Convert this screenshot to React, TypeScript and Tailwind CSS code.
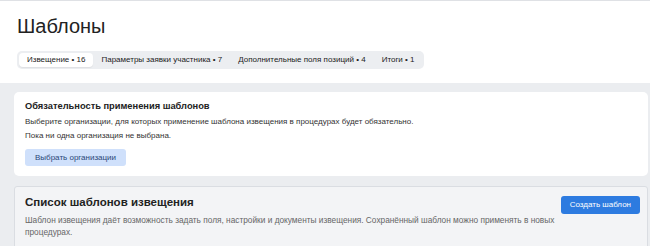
const tabs = [
  { label: "Извещение • 16", active: true },
  { label: "Параметры заявки участника • 7", active: false },
  { label: "Дополнительные поля позиций • 4", active: false },
  { label: "Итоги • 1", active: false },
];

export default function App() {
  return (
    <div className="h-[246px] w-[650px] overflow-hidden bg-[#ebedf0] font-['Liberation_Sans',Arial,sans-serif] text-[#222]">
      {/* header */}
      <div className="border-t border-[#dfe1e5] bg-white px-[17px] pb-[14px] pt-[13px]">
        <h1 className="text-[20px] leading-[24px] font-normal">Шаблоны</h1>
        <div className="mt-[13px] inline-flex items-center rounded-[5px] bg-[#eceef1] p-[2px]">
          {tabs.map((t) => (
            <div
              key={t.label}
              className={
                t.active
                  ? "rounded-[4px] bg-white px-[8px] py-[2px] text-[8px] leading-[10px] shadow-[0_1px_1px_rgba(0,0,0,0.06)]"
                  : "px-[8px] py-[2px] text-[8px] leading-[10px]"
              }
            >
              {t.label}
            </div>
          ))}
        </div>
      </div>

      {/* body */}
      <div className="flex flex-col gap-[10px] pl-[14px] pr-[2px] pt-[9px]">
        <div className="rounded-[5px] bg-white px-[11px] pb-[9px] pt-[8px]">
          <div className="text-[9.3px] font-bold leading-[12px]">Обязательность применения шаблонов</div>
          <p className="mt-[3px] text-[8px] leading-[14px] text-[#333]">
            Выберите организации, для которых применение шаблона извещения в процедурах будет обязательно.
          </p>
          <p className="text-[8px] leading-[14px] text-[#333]">Пока ни одна организация не выбрана.</p>
          <button className="mt-[6px] rounded-[3px] bg-[#cfe0fb] px-[10px] py-[3px] text-[8px] leading-[11px] text-[#2a4778]">
            Выбрать организации
          </button>
        </div>

        <div className="flex items-start gap-[4px] rounded-[3px] border border-[#dadde2] bg-[#f3f4f6] pb-[10px] pl-[10px] pr-[7px] pt-[7px]">
          <div className="min-w-0 flex-1">
            <div className="text-[11.5px] font-bold leading-[16px]">Список шаблонов извещения</div>
            <p className="mt-[4px] text-[8.3px] leading-[12px] text-[#666]">
              Шаблон извещения даёт возможность задать поля, настройки и документы извещения. Сохранённый шаблон можно применять в новых процедурах.
            </p>
          </div>
          <button className="mt-[2px] shrink-0 rounded-[3px] bg-[#2d7be0] px-[9px] py-[4px] text-[8px] leading-[10px] text-white">
            Создать шаблон
          </button>
        </div>
      </div>
    </div>
  );
}
